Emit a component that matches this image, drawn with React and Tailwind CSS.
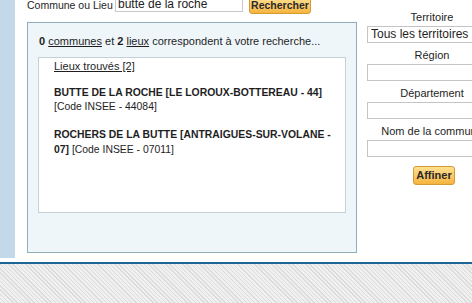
import React from 'react';

const field = 'h-[17px] w-[128px] border border-[#c4c4c4] bg-white';

function SideField({ label, children }) {
  return (
    <div className="flex flex-col items-center">
      <div className="h-[15px] leading-[15px] text-[11px] text-[#1e1e1e] whitespace-nowrap">{label}</div>
      <div className="mt-px self-start">{children}</div>
    </div>
  );
}

export default function App() {
  return (
    <div className="w-[472px] h-[303px] overflow-hidden bg-white font-['Liberation_Sans',Arial,sans-serif] text-[#1e1e1e]">
      <div className="flex h-[262px]">
        <div className="w-[15px] h-[258px] shrink-0 bg-[#c3d9ea]" />

        <div className="ml-[12px] w-[330px] shrink-0">
          <div className="-mt-[4px] flex items-start h-[26px]">
            <span className="mt-[2px] w-[88px] shrink-0 text-[10.5px] leading-[14px] whitespace-nowrap">Commune ou Lieu</span>
            <div className="h-[16px] w-[128px] border border-[#c9c9c9] bg-white px-[2px] text-[12px] leading-[14px] text-[#222]">
              butte de la roche
            </div>
            <button className="ml-[6px] mt-px h-[17px] w-[62px] rounded-[3px] border border-[#d49b32] bg-gradient-to-b from-[#fee08f] to-[#f5b43c] text-[10.5px] font-bold leading-[15px] text-[#2a2a2a]">
              Rechercher
            </button>
          </div>

          <div className="h-[231px] border border-[#93adbd] bg-[#eef6fa] px-[10px] pt-[11px]">
            <p className="pl-px text-[11px] leading-[14px] whitespace-nowrap">
              <b>0</b> <span className="underline">communes</span> et <b>2</b>{' '}
              <span className="underline">lieux</span> correspondent à votre recherche...
            </p>
            <div className="mt-[9px] h-[156px] border border-[#c6d1d7] bg-white pl-[15px] pr-[8px] pt-[1px]">
              <div className="text-[11px] leading-[14px] underline">Lieux trouvés [2]</div>
              <div className="mt-[13px] text-[10.4px] leading-[14px]">
                <b>BUTTE DE LA ROCHE [LE LOROUX-BOTTEREAU - 44]</b>
                <br />
                [Code INSEE - 44084]
              </div>
              <div className="mt-[13px] text-[10.4px] leading-[15px]">
                <b>ROCHERS DE LA BUTTE [ANTRAIGUES-SUR-VOLANE - 07]</b> [Code INSEE - 07011]
              </div>
            </div>
          </div>
        </div>

        <div className="ml-[10px] mt-[10px] w-[130px] shrink-0 flex flex-col gap-[5px]">
          <SideField label="Territoire">
            <div className={field + ' px-[3px] text-[12px] leading-[15px] whitespace-nowrap'}>Tous les territoires</div>
          </SideField>
          <SideField label="Région">
            <div className={field} />
          </SideField>
          <SideField label="Département">
            <div className={field} />
          </SideField>
          <SideField label="Nom de la commune">
            <div className={field} />
          </SideField>
          <div className="mt-[4px] flex justify-center pl-[4px]">
            <button className="h-[19px] w-[42px] rounded-[3px] border border-[#d49b32] bg-gradient-to-b from-[#fee08f] to-[#f5b43c] text-[11px] font-bold leading-[17px] text-[#2a2a2a]">
              Affiner
            </button>
          </div>
        </div>
      </div>

      <div className="h-[2px] bg-[#1c6594]" />
      <div className="h-[39px] bg-[repeating-linear-gradient(45deg,#dcdcdc_0px,#dcdcdc_1px,#f0f0f0_1px,#f0f0f0_3px)]" />
    </div>
  );
}
